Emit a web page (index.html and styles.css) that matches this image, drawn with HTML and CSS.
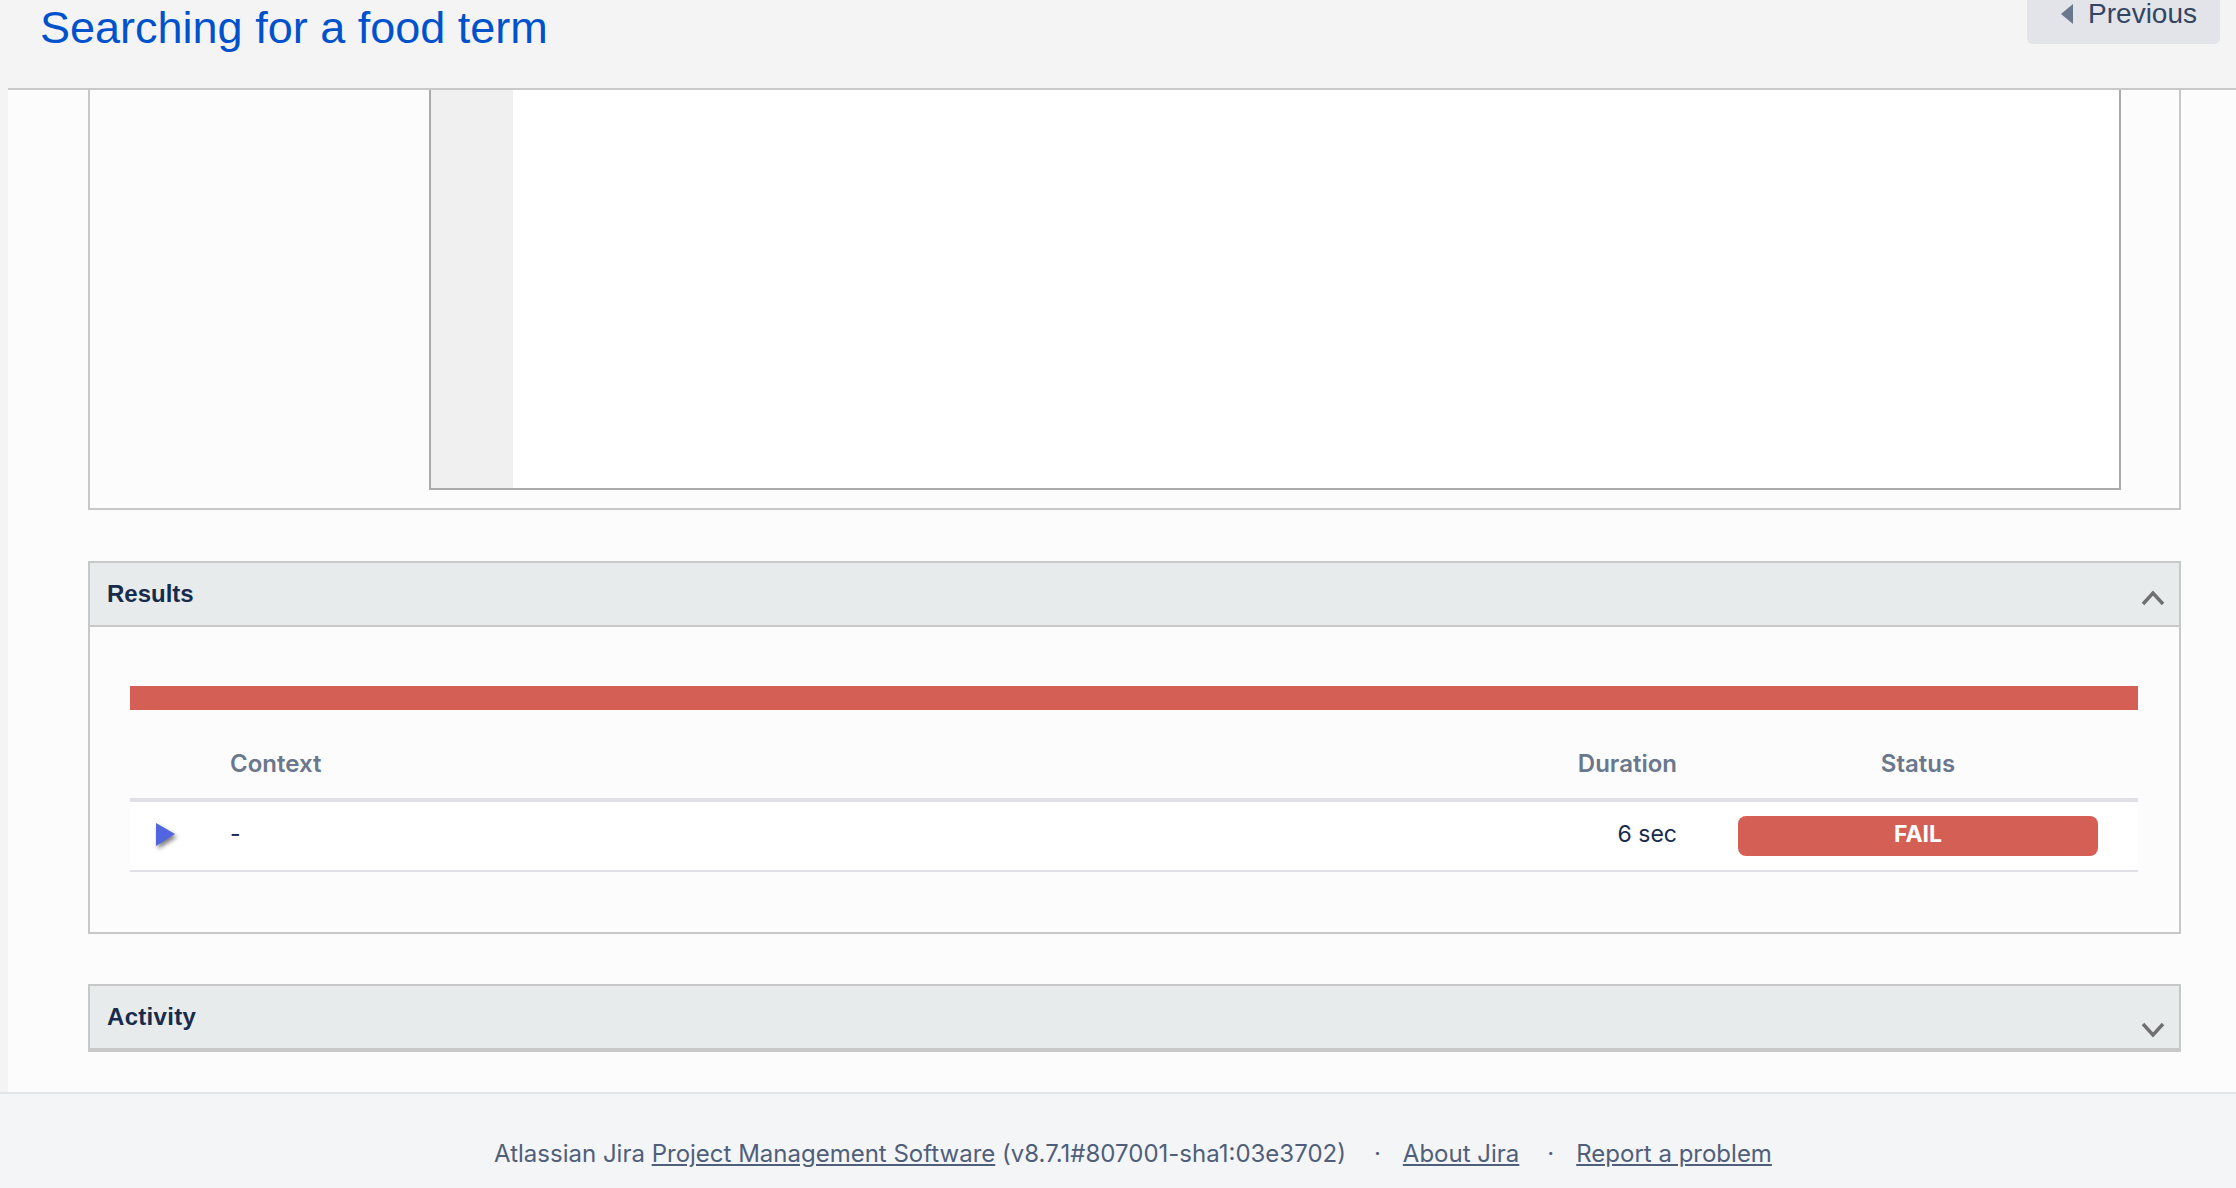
FILE: index.html
```html
<!DOCTYPE html>
<html lang="en">
<head>
    <meta charset="UTF-8">
    <title>Searching for a food term</title>
    <link rel="stylesheet" href="styles.css">
</head>
<body>
    <header class="page-header">
        <h1 class="issue-title">Searching for a food term</h1>
        <a class="prev-btn" href="#"><span class="prev-arrow"></span>Previous</a>
    </header>

    <main class="content">
        <!-- steps panel, scrolled so only its lower part shows -->
        <section class="panel panel-cut">
            <div class="steps">
                <div class="code-box">
                    <div class="gutter"></div>
                    <div class="code"></div>
                </div>
            </div>
        </section>

        <section class="panel panel-results">
            <div class="panel-head">
                <h2>Results</h2>
                <svg class="chev chev-up" width="24" height="16" viewBox="0 0 24 16">
                    <polyline points="2,14 12,3 22,14" fill="none" stroke="#707070" stroke-width="3.4"/>
                </svg>
            </div>
            <div class="results">
                <div class="progress"></div>
                <div class="runs-head">
                    <div></div>
                    <div>Context</div>
                    <div class="col-duration">Duration</div>
                    <div class="col-status">Status</div>
                </div>
                <div class="runs-row">
                    <div class="toggle">
                        <svg width="24" height="28" viewBox="0 0 24 28">
                            <polygon points="1,1 20,12 1,24" fill="#5165e0"/>
                        </svg>
                    </div>
                    <div class="cell-text">-</div>
                    <div class="col-duration cell-text">6 sec</div>
                    <div class="col-status"><span class="badge-fail">FAIL</span></div>
                </div>
            </div>
        </section>

        <section class="panel panel-activity">
            <div class="panel-head">
                <h2>Activity</h2>
                <svg class="chev chev-down" width="24" height="16" viewBox="0 0 24 16">
                    <polyline points="2,2 12,13 22,2" fill="none" stroke="#707070" stroke-width="3.4"/>
                </svg>
            </div>
        </section>
    </main>

    <footer class="footer">
        <ul>
            <li>Atlassian Jira <a href="#">Project Management Software</a> (v8.7.1#807001-sha1:03e3702)</li>
            <li><a href="#">About Jira</a></li>
            <li><a href="#">Report a problem</a></li>
        </ul>
    </footer>
</body>
</html>
```

FILE: styles.css
```css
*{
    margin:0;padding:0;
    box-sizing:border-box;
}
html,body{
    background-color:#f4f4f4;
    color:#172b4d;
    font-family:"Liberation Sans", Arial, sans-serif;
}
ul,li{
    list-style:none;
}
/* header */
.page-header{
    height:88px;
    display:flex;
    justify-content:space-between;
    align-items:flex-start;
    padding:0 16px 0 40px;
}
.issue-title{
    margin-top:5px;
    font-size:45px;
    line-height:45px;
    font-weight:normal;
    color:#0052cc;
}
.prev-btn{
    display:flex;
    align-items:center;
    height:56px;
    margin-top:-12px;
    padding:0 23px 4px 34px;
    border-radius:6px;
    background-color:#e2e4e9;
    color:#344563;
    font-size:28px;
    line-height:28px;
    text-decoration:none;
}
.prev-arrow{
    width:0;height:0;
    margin-right:15px;
    border-top:10px solid transparent;
    border-bottom:10px solid transparent;
    border-right:12px solid #6b778c;
}
/* main area */
.content{
    margin-left:8px;
    padding:0 55px 40px 80px;
    border-top:2px solid #c8c8c8;
    background-color:#fcfcfc;
}
.panel{
    margin-top:50px;
    border:2px solid #c8c8c8;
    background-color:#fcfcfc;
}
.panel-cut{
    margin-top:0;
    border-top:0;
}
.panel-results{
    margin-top:51px;
}
.steps{
    padding:0 58px 18px 339px;
}
.code-box{
    display:flex;
    height:400px;
    border:2px solid #aaa;
    border-top:0;
    background-color:#fff;
}
.gutter{
    width:82px;
    background-color:#f0f0f0;
}
.panel-head{
    display:flex;
    justify-content:space-between;
    align-items:center;
    height:64px;
    padding:0 14px 0 17px;
    border-bottom:2px solid #c8c8c8;
    background-color:#e8ebec;
}
.panel-head h2{
    font-size:24px;
    line-height:24px;
    font-weight:bold;
    color:#172b4d;
}
.panel-activity h2{
    letter-spacing:0.3px;
}
.chev-up{
    margin-top:8px;
}
.chev-down{
    margin-top:26px;
}
/* results */
.results{
    padding:59px 41px 60px 40px;
}
.progress{
    height:24px;
    background-color:#d35f55;
}
.runs-head,.runs-row{
    display:grid;
    grid-template-columns:100px 1fr 200px 440px;
    font-family:Inter, "Liberation Sans", sans-serif;
    font-size:23px;
    line-height:28px;
}
.runs-head{
    height:92px;
    align-items:end;
    padding-bottom:20px;
    border-bottom:4px solid #dfe1e6;
    color:#6b778c;
    font-size:24px;
    font-weight:600;
}
.runs-row{
    height:70px;
    align-items:center;
    border-bottom:2px solid #dfe1e6;
    background-color:#fff;
    color:#172b4d;
}
.cell-text{
    margin-bottom:5px;
}
.col-duration{
    text-align:right;
    padding-right:21px;
}
.col-status{
    text-align:center;
}
.toggle{
    padding-left:25px;
    display:flex;
}
.toggle svg{
    filter:drop-shadow(2px 3px 2px rgba(0,0,0,0.5));
}
.badge-fail{
    display:block;
    width:360px;
    height:40px;
    margin:0 auto;
    border-radius:8px;
    background-color:#d35f55;
    color:#fff;
    font-size:23px;
    line-height:36px;
    font-weight:700;
}
/* footer */
.footer{
    height:96px;
    padding-top:44px;
    border-top:2px solid #e1e4e8;
    background-color:#f4f5f7;
    color:#505f79;
    font-family:Inter, "Liberation Sans", sans-serif;
    font-size:24px;
    line-height:32px;
}
.footer ul{
    display:flex;
    justify-content:center;
    margin-left:30px;
}
.footer li+li::before{
    content:"·";
    margin:0 22px 0 28px;
}
.footer a{
    color:#505f79;
}
```
